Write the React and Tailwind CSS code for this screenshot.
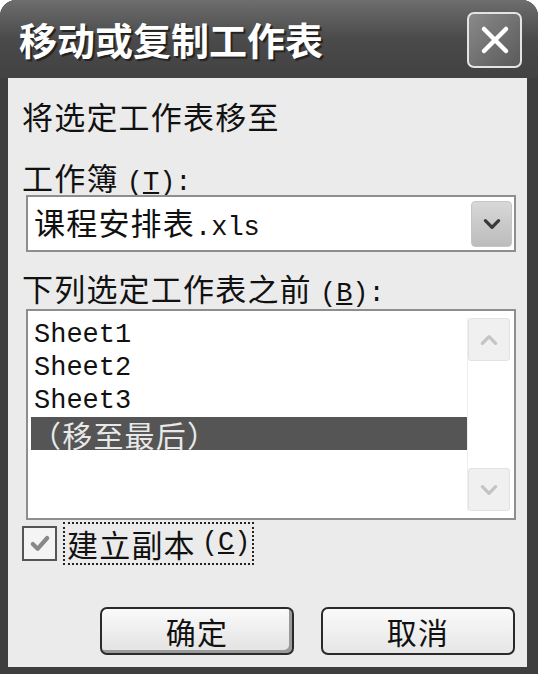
import { useState } from 'react';

const cjk = { fontFamily: '"Noto Sans CJK SC", "Noto Sans", sans-serif' };
const mono = { fontFamily: '"Liberation Mono", "Noto Sans CJK SC", monospace' };

function Latin({ children, className = '' }) {
    return (
        <span className={`text-[27px] tracking-normal ${className}`} style={mono}>
            {children}
        </span>
    );
}

function Chevron({ up = false, className = '' }) {
    return (
        <svg viewBox="0 0 20 20" className={className}>
            <path
                d={up ? 'M4 13 L10 7 L16 13' : 'M4 7 L10 13 L16 7'}
                fill="none"
                stroke="currentColor"
                strokeWidth="3"
                strokeLinecap="round"
                strokeLinejoin="round"
            />
        </svg>
    );
}

export default function App() {
    const [copy, setCopy] = useState(true);
    const [selected, setSelected] = useState(3);
    const sheets = ['Sheet1', 'Sheet2', 'Sheet3'];

    return (
        <div className="w-[538px] h-[674px] bg-white select-none" style={cjk}>
            <div className="h-full flex flex-col rounded-t-[16px] bg-[#3e3e3e] overflow-hidden">
                {/* title bar */}
                <div className="h-[78px] shrink-0 flex items-center justify-between pl-[19px] pr-[16px] bg-gradient-to-b from-[#6e6e6e] via-[#4a4a4a] to-[#424242]">
                    <h1 className="text-[38px] font-bold text-white leading-none [text-shadow:2px_2px_1px_#222]">
                        移动或复制工作表
                    </h1>
                    <button className="w-[55px] h-[56px] mt-[2px] rounded-[7px] border-2 border-[#e4e4e4] bg-gradient-to-br from-[#8a8a8a] to-[#5a5a5a] flex items-center justify-center text-white">
                        <svg viewBox="0 0 40 40" className="w-[40px] h-[40px]">
                            <path d="M9 9 L31 31 M31 9 L9 31" stroke="currentColor" strokeWidth="4.5" strokeLinecap="round" />
                        </svg>
                    </button>
                </div>

                {/* body */}
                <div className="flex-1 flex flex-col pl-[8px] pr-[11px] pb-[7px]">
                    <div className="flex-1 bg-[#ebebeb] flex flex-col pl-[14px] pr-[11px] text-[#111] text-[31px] tracking-[1.2px]">
                        <div className="mt-[20px] h-[36px] leading-[36px]">将选定工作表移至</div>

                        <div className="mt-[25px] h-[36px] leading-[36px]">
                            工作簿 <Latin>(<span className="underline">T</span>):</Latin>
                        </div>

                        <div className="ml-[4px] h-[57px] border-2 border-[#8e8e8e] bg-white flex items-center pl-[6px] pr-[2px]">
                            <span className="flex-1 leading-none">
                                课程安排表<Latin>.xls</Latin>
                            </span>
                            <div className="w-[41px] h-[46px] rounded-[4px] bg-gradient-to-b from-[#d8d8d8] to-[#bcbcbc] border border-[#c6c6c6] flex items-center justify-center text-[#3a3a3a]">
                                <Chevron className="w-[22px] h-[22px]" />
                            </div>
                        </div>

                        <div className="mt-[18px] h-[36px] leading-[36px]">
                            下列选定工作表之前 <Latin>(<span className="underline">B</span>):</Latin>
                        </div>

                        <div className="ml-[4px] mt-[3px] h-[211px] border-2 border-[#8e8e8e] bg-white flex">
                            <div className="flex-1 pt-[7px] pl-[3px]">
                                {sheets.map((s, i) => (
                                    <div
                                        key={s}
                                        onClick={() => setSelected(i)}
                                        className={`h-[33px] flex items-center pl-[3px] ${selected === i ? 'bg-[#555] text-[#e8e8e8]' : ''}`}
                                    >
                                        <Latin className="block leading-[28px]">{s}</Latin>
                                    </div>
                                ))}
                                <div
                                    onClick={() => setSelected(3)}
                                    className={`h-[33px] flex items-center ${selected === 3 ? 'bg-[#555] text-[#e8e8e8]' : ''}`}
                                >
                                    <span className="block text-[30px] leading-[30px]">（移至最后）</span>
                                </div>
                            </div>
                            <div className="w-[43px] my-[7px] mr-[4px] flex flex-col justify-between border-l border-[#eee]">
                                <div className="h-[43px] rounded-[3px] bg-[#f0f0f0] border border-[#e2e2e2] flex items-center justify-center text-[#c4c4c4]">
                                    <Chevron up className="w-[22px] h-[22px]" />
                                </div>
                                <div className="h-[43px] rounded-[3px] bg-[#f0f0f0] border border-[#e2e2e2] flex items-center justify-center text-[#c4c4c4]">
                                    <Chevron className="w-[22px] h-[22px]" />
                                </div>
                            </div>
                        </div>

                        <label className="mt-[2px] h-[43px] flex items-center cursor-pointer" onClick={() => setCopy(!copy)}>
                            <span className="w-[35px] h-[35px] border-2 border-[#555] bg-[#f4f4f4] flex items-center justify-center text-[#888]">
                                {copy && (
                                    <svg viewBox="0 0 20 20" className="w-[24px] h-[24px]">
                                        <path d="M4 10 L8 14 L16 5" fill="none" stroke="currentColor" strokeWidth="3.5" strokeLinecap="round" strokeLinejoin="round" />
                                    </svg>
                                )}
                            </span>
                            <span className="ml-[6px] h-[43px] px-[2px] flex items-center border-2 border-dotted border-[#222] leading-none">
                                建立副本 <Latin className="ml-[6px]">(<span className="underline">C</span>)</Latin>
                            </span>
                        </label>

                        <div className="mt-[42px] flex justify-end gap-[27px] pr-[1px]">
                            <button className="w-[194px] h-[48px] rounded-[7px] border-2 border-[#2a2a2a] bg-gradient-to-b from-[#fafafa] to-[#e2e2e2] shadow-[inset_-3px_-3px_0_#9a9a9a] text-[30px] leading-none">
                                确定
                            </button>
                            <button className="w-[194px] h-[48px] rounded-[7px] border-2 border-[#2a2a2a] bg-gradient-to-b from-[#fafafa] to-[#e6e6e6] text-[30px] leading-none">
                                取消
                            </button>
                        </div>
                    </div>
                </div>
            </div>
        </div>
    );
}
